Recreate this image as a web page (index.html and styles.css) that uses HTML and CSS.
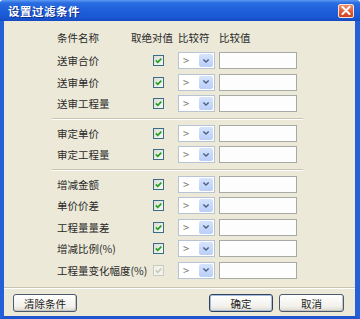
FILE: index.html
```html
<!DOCTYPE html>
<html>
<head>
<meta charset="utf-8">
<link rel="stylesheet" href="styles.css">
</head>
<body>
<div class="window">
  <div class="titlebar">
    <span class="title">设置过滤条件</span>
    <span class="close"><svg width="10" height="9" viewBox="0 0 10 9"><path d="M1.5 1 L8.5 8 M8.5 1 L1.5 8" stroke="#fff" stroke-width="2" stroke-linecap="round"/></svg></span>
  </div>
  <div class="frame">
    <div class="client">
      <div class="row header">
        <span>条件名称</span><span>取绝对值</span><span>比较符</span><span>比较值</span>
      </div>

      <div class="row"><span class="name">送审合价</span><span class="cell"><span class="chk"><svg viewBox="0 0 9 9"><path d="M1.8 4.4 L3.8 6.4 L7.3 2.6" fill="none" stroke="#21A121" stroke-width="1.6"/></svg></span></span><span class="sel"><span class="op">&gt;</span><span class="drop"><svg viewBox="0 0 9 6"><path d="M1.5 1.2 L4.5 4.2 L7.5 1.2" fill="none" stroke="#4D6185" stroke-width="1.6"/></svg></span></span><span class="inp"></span></div>
      <div class="row"><span class="name">送审单价</span><span class="cell"><span class="chk"><svg viewBox="0 0 9 9"><path d="M1.8 4.4 L3.8 6.4 L7.3 2.6" fill="none" stroke="#21A121" stroke-width="1.6"/></svg></span></span><span class="sel"><span class="op">&gt;</span><span class="drop"><svg viewBox="0 0 9 6"><path d="M1.5 1.2 L4.5 4.2 L7.5 1.2" fill="none" stroke="#4D6185" stroke-width="1.6"/></svg></span></span><span class="inp"></span></div>
      <div class="row"><span class="name">送审工程量</span><span class="cell"><span class="chk"><svg viewBox="0 0 9 9"><path d="M1.8 4.4 L3.8 6.4 L7.3 2.6" fill="none" stroke="#21A121" stroke-width="1.6"/></svg></span></span><span class="sel"><span class="op">&gt;</span><span class="drop"><svg viewBox="0 0 9 6"><path d="M1.5 1.2 L4.5 4.2 L7.5 1.2" fill="none" stroke="#4D6185" stroke-width="1.6"/></svg></span></span><span class="inp"></span></div>

      <div class="sep"></div>

      <div class="row"><span class="name">审定单价</span><span class="cell"><span class="chk"><svg viewBox="0 0 9 9"><path d="M1.8 4.4 L3.8 6.4 L7.3 2.6" fill="none" stroke="#21A121" stroke-width="1.6"/></svg></span></span><span class="sel"><span class="op">&gt;</span><span class="drop"><svg viewBox="0 0 9 6"><path d="M1.5 1.2 L4.5 4.2 L7.5 1.2" fill="none" stroke="#4D6185" stroke-width="1.6"/></svg></span></span><span class="inp"></span></div>
      <div class="row"><span class="name">审定工程量</span><span class="cell"><span class="chk"><svg viewBox="0 0 9 9"><path d="M1.8 4.4 L3.8 6.4 L7.3 2.6" fill="none" stroke="#21A121" stroke-width="1.6"/></svg></span></span><span class="sel"><span class="op">&gt;</span><span class="drop"><svg viewBox="0 0 9 6"><path d="M1.5 1.2 L4.5 4.2 L7.5 1.2" fill="none" stroke="#4D6185" stroke-width="1.6"/></svg></span></span><span class="inp"></span></div>

      <div class="sep"></div>

      <div class="row"><span class="name">增减金额</span><span class="cell"><span class="chk"><svg viewBox="0 0 9 9"><path d="M1.8 4.4 L3.8 6.4 L7.3 2.6" fill="none" stroke="#21A121" stroke-width="1.6"/></svg></span></span><span class="sel"><span class="op">&gt;</span><span class="drop"><svg viewBox="0 0 9 6"><path d="M1.5 1.2 L4.5 4.2 L7.5 1.2" fill="none" stroke="#4D6185" stroke-width="1.6"/></svg></span></span><span class="inp"></span></div>
      <div class="row"><span class="name">单价价差</span><span class="cell"><span class="chk"><svg viewBox="0 0 9 9"><path d="M1.8 4.4 L3.8 6.4 L7.3 2.6" fill="none" stroke="#21A121" stroke-width="1.6"/></svg></span></span><span class="sel"><span class="op">&gt;</span><span class="drop"><svg viewBox="0 0 9 6"><path d="M1.5 1.2 L4.5 4.2 L7.5 1.2" fill="none" stroke="#4D6185" stroke-width="1.6"/></svg></span></span><span class="inp"></span></div>
      <div class="row"><span class="name">工程量量差</span><span class="cell"><span class="chk"><svg viewBox="0 0 9 9"><path d="M1.8 4.4 L3.8 6.4 L7.3 2.6" fill="none" stroke="#21A121" stroke-width="1.6"/></svg></span></span><span class="sel"><span class="op">&gt;</span><span class="drop"><svg viewBox="0 0 9 6"><path d="M1.5 1.2 L4.5 4.2 L7.5 1.2" fill="none" stroke="#4D6185" stroke-width="1.6"/></svg></span></span><span class="inp"></span></div>
      <div class="row"><span class="name">增减比例(%)</span><span class="cell"><span class="chk"><svg viewBox="0 0 9 9"><path d="M1.8 4.4 L3.8 6.4 L7.3 2.6" fill="none" stroke="#21A121" stroke-width="1.6"/></svg></span></span><span class="sel"><span class="op">&gt;</span><span class="drop"><svg viewBox="0 0 9 6"><path d="M1.5 1.2 L4.5 4.2 L7.5 1.2" fill="none" stroke="#4D6185" stroke-width="1.6"/></svg></span></span><span class="inp"></span></div>
      <div class="row"><span class="name">工程量变化幅度(%)</span><span class="cell"><span class="chk disabled"><svg viewBox="0 0 9 9"><path d="M1.8 4.4 L3.8 6.4 L7.3 2.6" fill="none" stroke="#C9CCC0" stroke-width="1.6"/></svg></span></span><span class="sel"><span class="op">&gt;</span><span class="drop"><svg viewBox="0 0 9 6"><path d="M1.5 1.2 L4.5 4.2 L7.5 1.2" fill="none" stroke="#4D6185" stroke-width="1.6"/></svg></span></span><span class="inp"></span></div>

      <div class="hr"></div>

      <div class="buttons">
        <span class="btn">清除条件</span>
        <span class="spacer"></span>
        <span class="btn default">确定</span>
        <span class="btn wide">取消</span>
      </div>
    </div>
  </div>
</div>
</body>
</html>
```

FILE: styles.css
```css
* { box-sizing: border-box; }
html, body { margin: 0; padding: 0; }
body {
  width: 360px;
  height: 319px;
  overflow: hidden;
  background: #fff;
  font-family: "Noto Sans CJK SC", "Noto Sans", sans-serif;
  font-size: 11px;
  color: #2a2a2a;
}
.window {
  width: 360px;
  height: 319px;
  display: flex;
  flex-direction: column;
}
.titlebar {
  height: 21px;
  flex: none;
  display: flex;
  align-items: center;
  padding: 0 6px 0 8px;
  background: linear-gradient(#5C9AF2 0, #2A6CE0 3px, #1E5FDA 50%, #1A56D2 85%, #1549C0 100%);
  border-radius: 3px 3px 0 0;
}
.title {
  flex: 1;
  color: #fff;
  font-weight: bold;
  font-size: 11.5px;
  letter-spacing: 0.5px;
  text-shadow: 1px 1px 0 #0C2C8A;
}
.close {
  width: 16px;
  height: 14px;
  display: flex;
  align-items: center;
  justify-content: center;
  border: 1px solid #F4E4DC;
  border-radius: 2px;
  background: linear-gradient(#F09070, #E0582F 60%, #CC4420);
}
.close svg { display: block; }
.frame {
  flex: 1;
  display: flex;
  border-left: 4px solid #2461D8;
  border-right: 5px solid #2461D8;
  border-bottom: 3px solid #1E55CC;
}
.client {
  flex: 1;
  background: #ECE9D8;
  padding-top: 6px;
  display: flex;
  flex-direction: column;
}
.row {
  display: grid;
  grid-template-columns: 74px 47px 41px 78px;
  align-items: center;
  height: 21.5px;
  padding-left: 53px;
  white-space: nowrap;
  font-size: 10.5px;
}
.row.header {
  height: 20px;
  margin-bottom: 3px;
}
.name { white-space: nowrap; }
.cell { display: flex; }
.chk {
  width: 11px;
  height: 11px;
  margin-left: 22px;
  border: 1px solid #3A6E88;
  background: linear-gradient(135deg, #DCDCD4, #F8F8F4);
  display: flex;
}
.chk svg { width: 9px; height: 9px; display: block; }
.chk.disabled {
  border-color: #CACCC0;
  background: #F2F1EA;
}
.sel {
  width: 37px;
  height: 17px;
  border: 1px solid #B7C4D6;
  background: #fff;
  display: flex;
  align-items: stretch;
}
.op {
  flex: 1;
  padding-left: 4px;
  color: #777;
  font-size: 11px;
  line-height: 15px;
}
.drop {
  width: 14px;
  margin: 1px;
  background: linear-gradient(#D6E3FC, #B9CEF8);
  border-radius: 2px;
  display: flex;
  align-items: center;
  justify-content: center;
}
.drop svg { width: 8px; height: 6px; display: block; }
.inp {
  width: 78px;
  height: 17px;
  border: 1px solid #A7A9A4;
  background: #FDFDFD;
}
.sep {
  height: 8px;
  display: flex;
  align-items: center;
  margin: 0 52px 0 48px;
}
.sep::before {
  content: "";
  flex: 1;
  border-top: 1px solid #C8C4B0;
  border-bottom: 1px solid #FFFFFF;
}
.hr {
  margin-top: 6px;
  border-top: 1px solid #C8C4B0;
  border-bottom: 1px solid #FFFFFF;
}
.buttons {
  display: flex;
  gap: 6px;
  padding: 5px 11px 0 9px;
}
.spacer { flex: 1; }
.btn {
  width: 64px;
  height: 18px;
  display: flex;
  align-items: center;
  justify-content: center;
  border: 1px solid #4A5A70;
  border-radius: 3px;
  background: linear-gradient(#FFFFFF, #F2F1EC 70%, #DCDAD0);
  box-shadow: inset -1px -1px 0 #C8C6BA;
  font-size: 10.5px;
  color: #222;
}
.btn.default {
  border-color: #30425A;
  box-shadow: inset 0 0 0 1px #A8BDE0;
}
.btn.wide { width: 65px; }
```
